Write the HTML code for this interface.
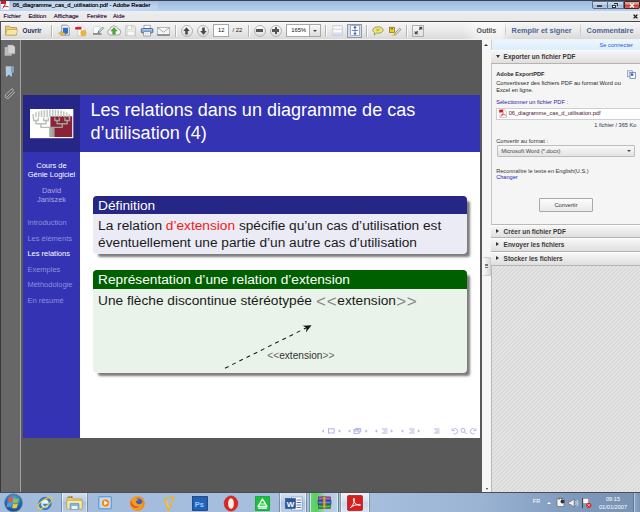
<!DOCTYPE html>
<html lang="fr"><head><meta charset="utf-8"><title>06_diagramme_cas_d_utilisation.pdf - Adobe Reader</title>
<style>
*{margin:0;padding:0;box-sizing:border-box}
html,body{width:640px;height:512px;overflow:hidden;background:#595959}
body{position:relative;font-family:"Liberation Sans",sans-serif;color:#222}
.a{position:absolute;white-space:nowrap}
/* window chrome */
#titlebar{left:0;top:0;width:640px;height:11px;background:linear-gradient(#39424f 0,#39424f 1px,#9dbbe0 1px,#abc6e8 6px,#b9d1ee 11px)}
#tglow{left:8px;top:1px;width:150px;height:10px;background:radial-gradient(ellipse at center,rgba(235,243,252,.55) 0,rgba(235,243,252,.38) 50%,rgba(235,243,252,0) 100%)}
#menubar{left:0;top:11px;width:640px;height:10px;background:linear-gradient(#edf0f5,#eaeaea 40%,#e9e9e9)}
#toolbar{left:0;top:20.5px;width:640px;height:19.5px;background:linear-gradient(#454545 0,#454545 1px,#fdfdfd 1px,#fdfdfd 2px,#f4f4f4 2px,#e9e9e9 55%,#dadada 94%,#f2f2f2 97%);border-left:1px solid #555}
#doc{left:0;top:40px;width:482px;height:452px;background:#595959}
#nav{left:0;top:40px;width:21px;height:452px;background:#676767 radial-gradient(#757575 .55px,rgba(117,117,117,0) .7px) 0 0/2px 2px;border-left:1px solid #383838;border-right:1px solid #a2a2a2}
#vscroll{left:482px;top:40px;width:9px;height:452px;background:#f6f6f6}
#panel{left:491px;top:40px;width:149px;height:452px;background:repeating-linear-gradient(135deg,#e8e8e8 0,#e4e4e4 .9px,#d6d6d6 1.42px,#d9d9d9 2.3px,#e8e8e8 2.83px);border-left:1px solid #b9b9b9}
#taskbar{left:0;top:492.4px;width:640px;height:19.6px;background:linear-gradient(90deg,#a3bbdb 0,#a8c0de 55%,#9bb4d4 75%,#7d99bb 90%,#7892b3 100%);border-top:1px solid #cfdced}
.tb{top:493px;height:19px;border-left:1px solid rgba(80,100,130,.6);border-right:1px solid rgba(80,100,130,.6);box-shadow:inset 1px 0 0 rgba(255,255,255,.6),inset -1px 0 0 rgba(255,255,255,.5);background:linear-gradient(rgba(255,255,255,.55),rgba(255,255,255,.2) 45%,rgba(255,255,255,.05) 50%,rgba(255,255,255,.25))}
.t5{font-size:5.6px;line-height:7px}
/* slide */
#slide{left:23px;top:95px;width:457px;height:343px;background:#fff;overflow:hidden}
#sb{left:0;top:0;width:57px;height:343px;background:#3333b3}
#sblogo{left:0;top:0;width:57px;height:57px;background:#262686}
#hdr{left:57px;top:0;width:400px;height:57px;background:#3333b3}
#hdr .tt{left:10.5px;top:4.3px;font-size:18.04px;line-height:22.6px;color:#fff;white-space:nowrap}
.sbt{left:0;width:57px;text-align:center;font-size:7.5px;line-height:9px;color:#fff}
.sbn{left:4.4px;font-size:7.5px;line-height:9px;color:#8f8fda}
.blk{left:69.5px;width:374.3px;border-radius:4px;box-shadow:4px 4.3px 2.4px -1.5px rgba(0,0,0,.52)}
.blk .bt{height:18px;border-radius:4px 4px 0 0;color:#fff;font-size:13.7px;line-height:20px;overflow:hidden;padding-left:5.6px;white-space:nowrap}
.blk .bb{border-radius:0 0 4px 4px;font-size:13.7px;line-height:17px;padding:2.6px 0 0 5.6px;color:#1a1a1a;white-space:nowrap}

.tx{font-size:5.8px;line-height:7px;color:#1c1c1c}
.b{font-weight:bold}
.sep{width:1px;background:#b4b4b4;box-shadow:1px 0 0 #fbfbfb}
.circ{width:12px;height:12px;margin:.5px;border-radius:50%;background:linear-gradient(#fdfdfd,#dcdcdc);border:1px solid #b2b2b2}
.box{background:#fff;border:1px solid #a8a8a8}
.ph{left:491px;width:149px;height:13.5px;background:linear-gradient(#f6f6f6,#dfdfdf);border-top:1px solid #fdfdfd;border-bottom:1px solid #b4b4b4}
.pht{left:503.6px;font-size:6.45px;line-height:8px;font-weight:bold;color:#3b3636}
.tri{width:0;height:0;border-style:solid}
</style></head><body>
<div class="a" id="titlebar"></div><div class="a" id="tglow"></div>
<div class="a" id="menubar"></div>
<div class="a" id="toolbar"></div>
<div class="a" id="doc"></div>
<div class="a" id="nav"></div>
<div class="a" id="vscroll"></div>
<div class="a" id="panel"></div>
<div class="a" id="taskbar"></div>

<!-- title bar -->
<svg class="a" style="left:1px;top:1px" width="9" height="9" viewBox="0 0 9 9"><rect x="0.3" y="0.2" width="8" height="8.4" fill="#fff"/><rect x="0" y="0" width="5" height="3" fill="#d71920"/><path d="M1.5 7.5C3 6 4 4.5 4.3 2.5M2 5.5C4 5 5.5 5 7.5 6" stroke="#d71920" stroke-width="1" fill="none"/></svg>
<div class="a tx" style="left:12.8px;top:2px;font-size:5.85px;color:#000;text-shadow:0 0 .5px rgba(0,0,0,.8)">06_diagramme_cas_d_utilisation.pdf - Adobe Reader</div>
<div class="a" style="left:591.500px;top:1.300px;width:16px;height:8.200px;border:1px solid #5a6d8a;border-radius:0 0 0 2px;background:linear-gradient(#cfdcee,#b9cde6 48%,#9db8d9 52%,#b4cae4)"><div class="a" style="left:4.5px;top:3px;width:5px;height:2px;background:#fff;border:.5px solid #444"></div></div>
<div class="a" style="left:607.500px;top:1.300px;width:16px;height:8.200px;border:1px solid #5a6d8a;border-left:none;background:linear-gradient(#cfdcee,#b9cde6 48%,#9db8d9 52%,#b4cae4)"><div class="a" style="left:4.5px;top:2.5px;width:4px;height:3px;background:#fff;border:.7px solid #333"></div><div class="a" style="left:6px;top:1px;width:4px;height:3px;border:.7px solid #333;border-left:none;border-bottom:none"></div></div>
<div class="a" style="left:623.500px;top:1.300px;width:16.500px;height:8.200px;border:1px solid #4f1f22;border-radius:0 0 2px 0;background:linear-gradient(#e6b0a6,#d67668 45%,#c4402f 55%,#d46a58)"><svg class="a" style="left:4.5px;top:1px" width="6" height="5" viewBox="0 0 6 5"><path d="M1 .5L5 4.500M5 .5L1 4.500" stroke="#fff" stroke-width="1.300"/></svg></div>
<!-- menu bar -->
<div class="a tx" style="left:3.6px;top:12.6px;color:#2b0a2e;text-shadow:0 0 .5px rgba(60,0,60,.6)">Fichier</div>
<div class="a tx" style="left:28.4px;top:12.6px;color:#2b0a2e;text-shadow:0 0 .5px rgba(60,0,60,.6)">Edition</div>
<div class="a tx" style="left:53.8px;top:12.6px;color:#2b0a2e;text-shadow:0 0 .5px rgba(60,0,60,.6);font-size:6px">Affichage</div>
<div class="a tx" style="left:87px;top:12.6px;color:#2b0a2e;text-shadow:0 0 .5px rgba(60,0,60,.6)">Fenêtre</div>
<div class="a tx" style="left:113px;top:12.6px;color:#2b0a2e;text-shadow:0 0 .5px rgba(60,0,60,.6)">Aide</div>
<svg class="a" style="left:633px;top:14px" width="5" height="5" viewBox="0 0 5 5"><path d="M.6 .6L4.400 4.400M4.400 .6L.6 4.400" stroke="#111" stroke-width="1.300"/></svg>
<!-- toolbar -->
<svg class="a" style="left:5px;top:25px" width="13" height="11" viewBox="0 0 13 11"><path d="M.5 10V1.200h4l1 1.300h6V10z" fill="#e9cf7c" stroke="#a98b3a" stroke-width=".7"/><path d="M.5 10L2 4.500h10.500L11.500 10z" fill="#f7e7a6" stroke="#b89a45" stroke-width=".6"/></svg>
<div class="a tx b" style="left:22.5px;top:27.2px;font-size:6.3px;color:#1f2d55">Ouvrir</div>
<div class="a sep" style="left:51px;top:24.5px;height:12.5px"></div>
<svg class="a" style="left:58px;top:24px" width="13" height="13" viewBox="0 0 13 13"><path d="M3.800 1.200h5.200l2.200 2.200v7.800H3.800z" fill="#fdfdfd" stroke="#7d7d88" stroke-width=".8"/><path d="M5 3.800h5v5.400L7.500 10.500 5 9.200z" fill="#2b72d4"/><path d="M.6 9.300l3-2.300v1.300c2.300-.1 3.800.7 4.400 2.700-1.300-.9-2.600-1.100-4.400-1v1.500z" fill="#f3bf2c" stroke="#b98a14" stroke-width=".4"/></svg>
<svg class="a" style="left:75px;top:24px" width="13" height="13" viewBox="0 0 13 13"><path d="M2.800 2.200h5l2.200 2.200v7.400H2.800z" fill="#fff" stroke="#b5b5b5" stroke-width=".6"/><rect x=".2" y="3" width="6.300" height="2.600" rx=".4" fill="#d9202a"/><path d="M8.300 5.600l.8 1.500 1.600-.6-.5 1.700 1.500.8-1.500.8.500 1.700-1.600-.6-.8 1.500-.8-1.500-1.600.6.500-1.700L4.900 9l1.500-.8-.5-1.700 1.600.6z" fill="#f2b52a" stroke="#c98d16" stroke-width=".3"/></svg>
<svg class="a" style="left:92px;top:24px" width="13" height="13" viewBox="0 0 13 13"><path d="M1.500 2.500h6.500v7H1.500z" fill="#fbfbfb" stroke="#c4c4c4" stroke-width=".5"/><path d="M1 10h8.500" stroke="#3a3a3a" stroke-width=".9"/><path d="M6 8.700l.5-1.700 4-4 1.200 1.200-4 4z" fill="#d8dde8" stroke="#44546e" stroke-width=".5"/><path d="M6 8.700l.5-1.700 1.200 1.200z" fill="#2a62c8"/></svg>
<svg class="a" style="left:107px;top:24px" width="14" height="13" viewBox="0 0 14 13"><path d="M3.500 11a3 3 0 0 1-.5-5.900A4 4 0 0 1 10.800 4.800 3.100 3.100 0 0 1 10.500 11z" fill="#f4f4f4" stroke="#8a8a8a" stroke-width=".7"/><path d="M7 3.500l3.200 3.500H8.300v3.300H5.700V7H3.800z" fill="#4cae3a" stroke="#2c7a20" stroke-width=".4"/></svg>
<svg class="a" style="left:124.500px;top:25px" width="12" height="12" viewBox="0 0 12 12"><path d="M.8.800h8.400l1.400 1.400v8.400H.8z" fill="#ececec" stroke="#b9b9b9" stroke-width=".8"/><rect x="2.600" y=".8" width="5.400" height="3.400" fill="#f8f8f8" stroke="#c6c6c6" stroke-width=".4"/><rect x="6" y="1.200" width="1.200" height="2.400" fill="#c9c9c9"/><rect x="2.300" y="6.200" width="6.800" height="4.400" fill="#f9f9f9" stroke="#c6c6c6" stroke-width=".4"/></svg>
<svg class="a" style="left:140px;top:24px" width="14" height="13" viewBox="0 0 14 13"><rect x="4" y="1.200" width="6.200" height="3.600" fill="#fff" stroke="#6f7f98" stroke-width=".6"/><rect x="1.300" y="4.600" width="11.600" height="4.200" rx="1" fill="#7fb3e4" stroke="#2f3f5c" stroke-width=".7"/><rect x="3.800" y="7.800" width="6.600" height="4.200" fill="#fff" stroke="#5f6f88" stroke-width=".6"/><path d="M2.200 5.600h9.800" stroke="#b9d8f4" stroke-width=".8"/><path d="M5 9.500h4.200M5 10.800h4.200" stroke="#bbb" stroke-width=".4"/></svg>
<svg class="a" style="left:157px;top:26.500px" width="13" height="9" viewBox="0 0 13 9"><rect x=".5" y=".5" width="12" height="7.500" fill="#f6f6f6" stroke="#a2a2a2" stroke-width=".7"/><path d="M.7.700l5.800 4.500L12.300.7" fill="none" stroke="#888" stroke-width=".7"/><path d="M.3 8h12.400" stroke="#444" stroke-width=".9"/></svg>
<div class="a sep" style="left:175px;top:24.5px;height:12.5px"></div>
<div class="a circ" style="left:180px;top:24px"></div>
<svg class="a" style="left:183px;top:26.500px" width="7" height="8" viewBox="0 0 7 8"><path d="M3.500.3L6.800 4H4.800v3.500H2.200V4H.2z" fill="#4a4a4a"/></svg>
<div class="a circ" style="left:196.500px;top:24px"></div>
<svg class="a" style="left:199.500px;top:26.700px" width="7" height="8" viewBox="0 0 7 8"><path d="M3.500 7.700L6.800 4H4.800V.5H2.200V4H.2z" fill="#4a4a4a"/></svg>
<div class="a box" style="left:213px;top:23.700px;width:16px;height:13.500px"></div>
<div class="a tx" style="left:218px;top:27.300px;color:#111">12</div>
<div class="a tx" style="left:232.500px;top:27.300px;color:#222">/ 22</div>
<div class="a sep" style="left:248px;top:24.5px;height:12.5px"></div>
<div class="a circ" style="left:253px;top:24px"></div><div class="a" style="left:256px;top:29.300px;width:7px;height:2.400px;background:#555"></div>
<div class="a circ" style="left:269.300px;top:24px"></div><div class="a" style="left:272.300px;top:29.300px;width:7px;height:2.400px;background:#555"></div><div class="a" style="left:274.600px;top:27px;width:2.400px;height:7px;background:#555"></div>
<div class="a box" style="left:286px;top:23.700px;width:24px;height:13.500px"></div>
<div class="a tx" style="left:291.300px;top:27.300px;color:#111">165%</div>
<div class="a" style="left:310px;top:23.700px;width:10.500px;height:13.500px;border:1px solid #a8a8a8;border-left:none;background:linear-gradient(#f9f9f9,#dcdcdc)"></div>
<div class="a tri" style="left:313.200px;top:30px;border-width:2.200px 2px 0 2px;border-color:#444 transparent transparent transparent"></div>
<div class="a sep" style="left:325px;top:24.5px;height:12.5px"></div>
<svg class="a" style="left:332px;top:25px" width="11" height="11" viewBox="0 0 11 11"><rect x=".8" y=".8" width="9.400" height="9.400" fill="#fafafc" stroke="#bcbcc8" stroke-width=".7"/><path d="M1 4.200h9" stroke="#c4c8d8" stroke-width=".7"/><rect x="1.200" y="7.500" width="8.600" height="2.400" fill="#cfdcf2"/></svg>
<div class="a" style="left:347px;top:23.500px;width:14.500px;height:14px;background:#d4dde9;border:1px solid #8e9aac"></div>
<svg class="a" style="left:349.500px;top:25px" width="10" height="11" viewBox="0 0 10 11"><rect x=".7" y=".5" width="8.600" height="10" fill="#fff" stroke="#7a88a4" stroke-width=".6"/><path d="M5 1.500v8M1.800 5.500h6.400M5 1.300l-1.200 1.500h2.400zM5 9.700L3.800 8.200h2.400z" stroke="#2f5fb8" stroke-width=".7" fill="#2f5fb8"/></svg>
<div class="a sep" style="left:365.500px;top:24.5px;height:12.5px"></div>
<svg class="a" style="left:371.500px;top:26px" width="12" height="10" viewBox="0 0 12 10"><path d="M6 .8c2.900 0 5.200 1.400 5.200 3.200S8.900 7.200 6 7.200c-.5 0-1 0-1.500-.1L2.300 9l.4-2.400C1.500 6 .8 5.100.8 4 .8 2.200 3.100.8 6 .8z" fill="#f4ea6e" stroke="#7d7a5a" stroke-width=".7"/><path d="M3.800 3.300h4.400M3.800 4.700h3.400" stroke="#8d8a4a" stroke-width=".5"/></svg>
<svg class="a" style="left:388px;top:25px" width="14" height="12" viewBox="0 0 14 12"><rect x="1.300" y="2.200" width="5.200" height="5.200" fill="#f0d11e" stroke="#6a5d1a" stroke-width=".6"/><path d="M2.800 3.800h2.200" stroke="#222" stroke-width=".7"/><path d="M6.300 10.200l.7-2.200 4.600-4.800 1.400 1.300-4.600 4.800z" fill="#e9e2c4" stroke="#4a4a4a" stroke-width=".5"/><path d="M3.800 10c1.300.6 2.600.5 3.800-.2" stroke="#efd01c" stroke-width="1.100" fill="none"/></svg>
<div class="a sep" style="left:406px;top:24.5px;height:12.5px"></div>
<div class="a" style="left:412px;top:24.500px;width:12px;height:12px;background:linear-gradient(#fafafa,#dedede);border:1px solid #b0b0b0"></div>
<svg class="a" style="left:413.500px;top:26px" width="9" height="9" viewBox="0 0 9 9"><path d="M8.300.7v3.600L7.100 3.100 5.900 4.300 4.700 3.100 5.900 1.900 4.700.7zM.7 8.300V4.700l1.200 1.200 1.200-1.200 1.200 1.200-1.200 1.200 1.200 1.200z" fill="#4d4d4d"/></svg>
<div class="a" style="left:462px;top:22.500px;width:52px;height:16.500px;background:linear-gradient(90deg,rgba(255,255,255,0),rgba(255,255,255,.55) 35%,rgba(255,255,255,.55) 75%,rgba(255,255,255,0))"></div>
<div class="a tx b" style="left:476.500px;top:26.500px;font-size:6.950px;line-height:8px;color:#525252">Outils</div>
<div class="a" style="left:505px;top:22px;width:1px;height:17px;background:linear-gradient(rgba(170,170,170,0),#c2c2c2 50%,rgba(170,170,170,0))"></div>
<div class="a tx b" style="left:511.600px;top:26.500px;font-size:7.350px;line-height:8px;color:#4b6590">Remplir et signer</div>
<div class="a" style="left:579.500px;top:22px;width:1px;height:17px;background:linear-gradient(rgba(170,170,170,0),#c2c2c2 50%,rgba(170,170,170,0))"></div>
<div class="a tx b" style="left:586.600px;top:26.500px;font-size:7.350px;line-height:8px;color:#4b6590">Commentaire</div>

<svg class="a" style="left:4px;top:44px" width="12" height="13" viewBox="0 0 12 13"><rect x=".8" y="3" width="7" height="8.800" fill="#bdbdbd" stroke="#8d8d8d" stroke-width=".4"/><path d="M3.800 1h5.200l2 2v6.800H3.800z" fill="#d2d2d2" stroke="#9a9a9a" stroke-width=".4"/></svg>
<svg class="a" style="left:5px;top:66px" width="10" height="12" viewBox="0 0 10 12"><path d="M.8.600h7.800v6H7V11L4 8.300 1 11z" fill="#a9c1d2"/><path d="M5.500.600h3.100v6H5.500z" fill="#7fa3bd"/><path d="M.8.600h5v10.200L4 8.300 1 11z" fill="#b4cbdb"/></svg>
<svg class="a" style="left:4px;top:87px" width="12" height="13" viewBox="0 0 12 13"><path d="M3.200 9.800l5.800-5.600a1.300 1.300 0 0 0-1.900-1.900L1.800 7.600a2.300 2.300 0 0 0 3.300 3.200l5.500-5.500" fill="none" stroke="#bdbdbd" stroke-width=".9" stroke-linecap="round"/></svg>

<!-- right panel -->
<div class="a" style="left:491px;top:40px;width:149px;height:10.5px;background:linear-gradient(#ecf6fe,#dbeefc);border-left:1px solid #c5d3df"></div>
<div class="a tx" style="left:599.5px;top:41.800px;font-size:5.700px;color:#1f55d8">Se connecter</div>
<div class="a ph" style="top:50px"></div>
<div class="a tri" style="left:495.800px;top:55.300px;border-width:3px 2.300px 0 2.300px;border-color:#333 transparent transparent transparent"></div>
<div class="a pht" style="top:52.700px">Exporter un fichier PDF</div>
<div class="a" style="left:491px;top:63.500px;width:149px;height:161.500px;background:#f5f5f5;border-left:1px solid #c4c4c4;border-bottom:1px solid #b9b9b9"></div>
<div class="a tx b" style="left:496.200px;top:71.200px;font-size:5.650px;color:#2b2b2b">Adobe ExportPDF</div>
<svg class="a" style="left:627px;top:70px" width="9" height="9" viewBox="0 0 9 9"><rect x=".5" y=".8" width="5" height="6" fill="#dfe9f6" stroke="#6d86ad" stroke-width=".6"/><rect x="3" y="2.500" width="5.300" height="6" fill="#fff" stroke="#4f6c9c" stroke-width=".7"/><rect x="3.800" y="3.300" width="2.500" height="2.500" fill="#3c6bc0"/></svg>
<div class="a tx" style="left:496.200px;top:79.800px;font-size:5.700px;color:#262626">Convertissez des fichiers PDF au format Word ou</div>
<div class="a tx" style="left:496.200px;top:86.600px;font-size:5.700px;color:#262626">Excel en ligne.</div>
<div class="a tx" style="left:496.200px;top:99.200px;font-size:5.650px;color:#2a2396">Sélectionner un fichier PDF :</div>
<div class="a" style="left:496px;top:107.500px;width:144px;height:12.500px;background:#fff;border:1px solid #cfcfcf;border-right:none"></div>
<svg class="a" style="left:498.500px;top:109.300px" width="8" height="9" viewBox="0 0 8 9"><path d="M1 .4h4.500l2 2v6.200H1z" fill="#fff" stroke="#999" stroke-width=".5"/><rect x=".2" y=".8" width="4" height="2.600" fill="#d71920"/><path d="M2 7.500C3.200 6.300 4 5 4.200 3.500M2.300 6c1.600-.5 3-.5 4.500.2" stroke="#d71920" stroke-width=".8" fill="none"/></svg>
<div class="a tx" style="left:508.700px;top:109.800px;font-size:5.650px;color:#4a1234">06_diagramme_cas_d_utilisation.pdf</div>
<div class="a tx" style="left:540px;width:96.300px;text-align:right;top:121.500px;font-size:5.600px;color:#2a3350">1 fichier / 365 Ko</div>
<div class="a tx" style="left:496.200px;top:138px;font-size:5.700px;color:#303030">Convertir au format :</div>
<div class="a" style="left:497px;top:145px;width:138px;height:11.500px;background:linear-gradient(#f8f8f8,#e4e4e4);border:1px solid #bdbdbd;border-radius:1px"></div>
<div class="a tx" style="left:501.200px;top:148px;font-size:5.700px;color:#444">Microsoft Word (*.docx)</div>
<div class="a tri" style="left:627px;top:149.500px;border-width:2.300px 2px 0 2px;border-color:#444 transparent transparent transparent"></div>
<div class="a tx" style="left:496.200px;top:167.800px;font-size:5.600px;color:#333">Reconnaître le texte en English(U.S.)</div>
<div class="a tx" style="left:496.200px;top:173.500px;font-size:5.600px;color:#1c1cc0">Changer</div>
<div class="a" style="left:539px;top:198px;width:54px;height:14px;background:linear-gradient(#fcfcfc,#e9e9e9);border:1px solid #a9a9a9;border-radius:1px"></div>
<div class="a tx" style="left:539px;width:54px;text-align:center;top:201.500px;font-size:5.700px;color:#333">Convertir</div>
<div class="a ph" style="top:224.500px"></div><div class="a ph" style="top:238px"></div><div class="a ph" style="top:251.500px;height:14px"></div>
<div class="a tri" style="left:496.300px;top:228.700px;border-width:2.300px 0 2.300px 3px;border-color:transparent transparent transparent #333"></div>
<div class="a tri" style="left:496.300px;top:242.200px;border-width:2.300px 0 2.300px 3px;border-color:transparent transparent transparent #333"></div>
<div class="a tri" style="left:496.300px;top:255.700px;border-width:2.300px 0 2.300px 3px;border-color:transparent transparent transparent #333"></div>
<div class="a pht" style="top:227.900px">Créer un fichier PDF</div>
<div class="a pht" style="top:241.300px">Envoyer les fichiers</div>
<div class="a pht" style="top:254.900px">Stocker les fichiers</div>
<!-- scroll strip -->
<div class="a tri" style="left:484.300px;top:43.600px;border-width:0 2.200px 2.600px 2.200px;border-color:transparent transparent #333 transparent"></div>
<div class="a tri" style="left:485.500px;top:487.500px;border-width:2px 1.500px 0 1.500px;border-color:#333 transparent transparent transparent"></div>
<div class="a" style="left:483px;top:257px;width:7.500px;height:18.500px;background:linear-gradient(90deg,#fbfbfb,#d9d9d9);border:1px solid #cfcfcf;border-left:none;border-radius:1px"></div>
<div class="a" style="left:485.300px;top:264px;width:3px;height:3.500px;background:repeating-linear-gradient(#777 0,#777 .7px,transparent .7px,transparent 1.400px)"></div>

<!-- taskbar -->
<div class="a" style="left:0;top:491.600px;width:640px;height:.9px;background:#4a4f57"></div>
<div class="a tb" style="left:61px;width:27px"></div>
<div class="a tb" style="left:278.500px;width:28.500px"></div>
<div class="a tb" style="left:309px;width:29.500px;background:linear-gradient(90deg,rgba(90,215,90,.75) 0,rgba(80,210,80,.9) 22%,rgba(110,210,110,.55) 40%,rgba(200,225,235,.3) 55%,rgba(255,255,255,.25) 100%)"></div>
<div class="a tb" style="left:340px;width:30px;background:linear-gradient(rgba(255,255,255,.8),rgba(255,255,255,.55) 45%,rgba(255,255,255,.4) 50%,rgba(255,255,255,.6))"></div>
<svg class="a" style="left:3px;top:493px" width="21" height="19" viewBox="0 0 21 19">
  <defs><radialGradient id="orb" cx=".5" cy=".35" r=".7"><stop offset="0" stop-color="#6fb6ec"/><stop offset=".55" stop-color="#2a72b8"/><stop offset="1" stop-color="#123a6e"/></radialGradient></defs>
  <circle cx="10.500" cy="9.800" r="9" fill="url(#orb)" stroke="#5f86b4" stroke-width=".6"/>
  <g transform="translate(10.3 9.6) scale(1.3) translate(-9.9 -9.8)">
  <path d="M6.300 6.300c1.300-.8 2.500-.7 3.600-.1l-.7 3.200c-1.100-.6-2.300-.6-3.600.1z" fill="#ea5a2c"/>
  <path d="M10.700 6.600c1.200.6 2.400.6 3.700-.1l-.8 3.200c-1.200.7-2.400.7-3.600.1z" fill="#86c640"/>
  <path d="M5.300 10.300c1.300-.8 2.500-.7 3.600-.1l-.7 3.200c-1.100-.6-2.300-.6-3.600.1z" fill="#4a9ae6"/>
  <path d="M9.700 10.600c1.200.6 2.400.6 3.700-.1l-.8 3.200c-1.200.7-2.400.7-3.600.1z" fill="#f8c62c"/>
  </g>
</svg>
<svg class="a" style="left:36px;top:494px" width="18" height="18" viewBox="0 0 18 18">
  <circle cx="9" cy="9.500" r="6.200" fill="#2f86d6" stroke="#1a5ea8" stroke-width=".6"/>
  <path d="M5.200 9.700h7.600c0-2.600-1.600-4.200-3.800-4.200s-3.900 1.700-3.900 4.100c0 2.500 1.700 4.200 4 4.200 1.600 0 2.900-.8 3.500-2.200h-2.200c-.3.500-.8.700-1.400.7-1 0-1.700-.7-1.800-1.800" fill="#eaf4fd"/>
  <ellipse cx="9" cy="9" rx="8.600" ry="3.400" transform="rotate(-35 9 9)" fill="none" stroke="#f2c22e" stroke-width="1.200"/>
</svg>
<svg class="a" style="left:66px;top:495px" width="17" height="16" viewBox="0 0 17 16">
  <path d="M1 14V2.500h5l1.200 1.500H16V14z" fill="#e8c968" stroke="#b1902f" stroke-width=".6"/>
  <path d="M1 14V5.500h15V14z" fill="#f8e7a0" stroke="#c2a345" stroke-width=".5"/>
  <rect x="4" y="8.500" width="9" height="5.500" rx=".8" fill="#79b7e8" stroke="#3c7fba" stroke-width=".5"/>
  <rect x="5.500" y="11" width="6" height="3" fill="#e9f3fb"/>
  <rect x="2" y="1.300" width="2" height="1.400" fill="#4caf50"/><rect x="4.500" y="1.300" width="2" height="1.400" fill="#e53935"/>
</svg>
<svg class="a" style="left:98px;top:496px" width="15" height="14" viewBox="0 0 15 14">
  <rect x=".5" y=".5" width="13" height="12.500" rx="1" fill="#7db4e8" stroke="#4f8ccc" stroke-width=".6"/>
  <rect x="1.500" y="1.500" width="11" height="10.500" fill="#b4d8f6"/>
  <circle cx="7.500" cy="7" r="4.300" fill="#f28b1e" stroke="#fff" stroke-width=".6"/>
  <path d="M6.200 4.800L10 7 6.200 9.200z" fill="#fff"/>
</svg>
<svg class="a" style="left:129px;top:494.500px" width="17" height="17" viewBox="0 0 17 17">
  <circle cx="8.500" cy="8.500" r="7.300" fill="#f08a1c"/>
  <circle cx="9" cy="8" r="4.600" fill="#3b5fc0"/>
  <path d="M2 5c2-3.500 6-4.800 9.500-3.200-2.500-.2-4 .8-4.800 2.300 1.300-.2 2.500.3 3 1.500-1.500-.3-2.500.2-3 1 .5 1.800 2 2.800 4 2.600 1.500-.2 2.600-1.100 3-2.700.8 3-.2 6-2.700 7.600-3 1.900-6.800 1.300-8.800-1.300C.8 10.500.7 7.500 2 5z" fill="#f39c22"/>
  <path d="M2 5c.3 2.500 1.300 4.300 3 5.500 1.700 1.200 4 1.500 6 .6-1.500 2-4.500 2.600-6.800 1.200C1.800 10.800.9 7.800 2 5z" fill="#e4511c"/>
</svg>
<svg class="a" style="left:162px;top:494.500px" width="15" height="17" viewBox="0 0 15 17">
  <path d="M2.500 4.500c2.500-1.300 5.500-2.200 9.500-2.600L6.500 15.800 5.300 12z" fill="none" stroke="#f3b41a" stroke-width="1.400" stroke-linejoin="round"/>
  <path d="M4 5.200l2.500 7.500" stroke="#f8d36a" stroke-width=".8"/>
</svg>
<svg class="a" style="left:192px;top:495.500px" width="16" height="15" viewBox="0 0 16 15">
  <rect x=".4" y=".4" width="15.200" height="14.200" fill="#1c4f9c" stroke="#0e2f66" stroke-width=".6"/>
  <rect x="1.300" y="1.300" width="13.400" height="12.400" fill="#2463b8"/>
  <text x="2.800" y="10.800" font-family="Liberation Sans, sans-serif" font-size="7.500" font-weight="bold" fill="#8fd0ff">Ps</text>
</svg>
<svg class="a" style="left:223px;top:494.500px" width="16" height="17" viewBox="0 0 16 17">
  <ellipse cx="8" cy="8.500" rx="6.800" ry="7.600" fill="#e1261c"/>
  <ellipse cx="8" cy="8.500" rx="2.900" ry="5.300" fill="#f4f0f0"/>
  <ellipse cx="8" cy="8.500" rx="6.800" ry="7.600" fill="none" stroke="#a8140e" stroke-width=".5"/>
</svg>
<svg class="a" style="left:254.500px;top:495.500px" width="15" height="15" viewBox="0 0 15 15">
  <rect x=".3" y=".3" width="14.400" height="14.400" fill="#18c23a" stroke="#0d8a25" stroke-width=".5"/>
  <path d="M7.500 3L12 10.500H3z" fill="none" stroke="#fff" stroke-width="1.400" stroke-linejoin="round"/>
  <path d="M3 12.200h9M5.200 8h4.600" stroke="#fff" stroke-width="1.200"/>
</svg>
<svg class="a" style="left:285px;top:495.500px" width="18" height="15" viewBox="0 0 18 15">
  <rect x="6.500" y="1" width="10.500" height="13" fill="#fff" stroke="#7a8fb8" stroke-width=".6"/>
  <path d="M11.500 4h4.500M11.500 6.500h4.500M11.500 9h4.500M11.500 11.500h4.500" stroke="#2b5aa8" stroke-width=".8"/>
  <rect x=".5" y="2.500" width="10" height="10" fill="#2b579a" stroke="#1c3f78" stroke-width=".5"/>
  <text x="1.800" y="10.600" font-family="Liberation Sans, sans-serif" font-size="8" font-weight="bold" fill="#fff">W</text>
</svg>
<svg class="a" style="left:316px;top:496px" width="17" height="14" viewBox="0 0 17 16">
  <rect x="1.500" y="1" width="14" height="4.300" fill="#a03fa8" stroke="#3a1a5c" stroke-width=".5"/>
  <rect x="1" y="5.300" width="15" height="4.500" fill="#3568c8" stroke="#1a2f6c" stroke-width=".5"/>
  <rect x="1.500" y="9.800" width="14" height="4.700" fill="#2f9a3a" stroke="#14501a" stroke-width=".5"/>
  <rect x="6.800" y=".8" width="3.200" height="13.800" fill="#c9a53a" stroke="#6a5210" stroke-width=".4"/>
  <path d="M2 2.700h13M2 7.500h13M2 12h13" stroke="#e8d9a0" stroke-width=".5" stroke-opacity=".7"/>
</svg>
<svg class="a" style="left:347px;top:495px" width="16" height="16" viewBox="0 0 16 16">
  <rect x=".5" y=".5" width="15" height="15" rx="1.200" fill="#d81e1e" stroke="#8c0e0e" stroke-width=".6"/>
  <path d="M3.200 12.800c2.200-1.800 3.900-4.600 4.400-8.300.2-1.500-1.300-1.600-1.300-.2.200 3 2.700 5.600 6.200 6.200 1.300.2 1.300-1.100 0-1.100-3.300.1-6.500 1.200-9 3.100" fill="none" stroke="#fff" stroke-width="1"/>
</svg>
<div class="a tx" style="left:532.800px;top:498.200px;font-size:5.600px;color:#fff">FR</div>
<div class="a tri" style="left:546.800px;top:501.800px;border-width:0 2.200px 2.400px 2.200px;border-color:transparent transparent #fff transparent"></div>
<svg class="a" style="left:556px;top:497px" width="10" height="11" viewBox="0 0 10 11"><rect x="1" y="1.500" width="7" height="8" rx="1" fill="#f4f4f4" stroke="#555" stroke-width=".6"/><path d="M3 .8v2M6 .8v2" stroke="#444" stroke-width=".8"/><circle cx="6.500" cy="4.500" r="2" fill="#333"/></svg>
<svg class="a" style="left:568px;top:497.500px" width="11" height="10" viewBox="0 0 11 10"><path d="M.8 3.500h2L6 1v8L2.800 6.500h-2z" fill="#f4f4f4" stroke="#555" stroke-width=".5"/><path d="M7.500 3c.8.600.8 3.400 0 4M8.800 1.800c1.500 1.400 1.500 5 0 6.400" stroke="#f4f4f4" stroke-width=".7" fill="none"/></svg>
<svg class="a" style="left:581px;top:496.500px" width="11" height="12" viewBox="0 0 11 12"><path d="M1.500 1v10" stroke="#444" stroke-width="1"/><path d="M2 1.500h5.500v5H2z" fill="#fafafa" stroke="#666" stroke-width=".4"/><circle cx="7.800" cy="8.300" r="2.600" fill="#e0241c"/><path d="M6.700 7.200l2.200 2.200M8.900 7.200L6.700 9.400" stroke="#fff" stroke-width=".7"/></svg>
<div class="a tx" style="left:596px;width:34px;text-align:center;top:495.800px;font-size:5.600px;color:#fff">09:15</div>
<div class="a tx" style="left:596px;width:34px;text-align:center;top:503.800px;font-size:5.600px;color:#fff">01/01/2007</div>
<div class="a" style="left:633px;top:493px;width:7px;height:19px;border-left:1px solid #5f7896;background:linear-gradient(90deg,#8fa8c6,#7a93b3);box-shadow:inset 1px 0 0 rgba(255,255,255,.4)"></div>

<div class="a" id="slide">
  <div class="a" id="sb"></div>
  <div class="a" id="sblogo"></div>
  <div class="a" id="hdr"><div class="a tt">Les relations dans un diagramme de cas<br>d’utilisation (4)</div></div>
  <div class="a sbt" style="top:66px">Cours de<br>Génie Logiciel</div>
  <div class="a sbt" style="top:91.1px;color:#a9a9e2">David<br>Janiszek</div>
  <div class="a sbn" style="top:122.7px">Introduction</div>
  <div class="a sbn" style="top:138.5px">Les éléments</div>
  <div class="a sbn" style="top:153.7px;color:#fff">Les relations</div>
  <div class="a sbn" style="top:169.5px">Exemples</div>
  <div class="a sbn" style="top:185.2px">Méthodologie</div>
  <div class="a sbn" style="top:200.8px">En résumé</div>

  <div class="a blk" style="top:101.2px;height:58.3px;background:#ebebf6">
    <div class="bt" style="background:#262686">Définition</div>
    <div class="bb">La relation <span style="color:#f61818">d’extension</span> spécifie qu’un cas d’utilisation est<br>éventuellement une partie d’un autre cas d’utilisation</div>
  </div>
  <div class="a blk" style="top:175.2px;height:102.8px;background:#e9f3ea">
    <div class="bt" style="background:#006000;height:19px">Représentation d’une relation d’extension</div>
    <div class="bb">Une flèche discontinue stéréotypée <span style="color:#858585;font-size:17px;line-height:0;letter-spacing:.72px;padding-left:.3px;position:relative;top:2.5px">&lt;&lt;</span>extension<span style="color:#858585;font-size:17px;line-height:0;letter-spacing:.72px;padding-left:.3px;position:relative;top:2.5px">&gt;&gt;</span></div>
  </div>
  <svg class="a" style="left:7px;top:14px" width="44" height="30" viewBox="0 0 44 30">
    <rect x="0" y="0" width="43.3" height="29.2" fill="#fff"/>
    <rect x="20.4" y="7.3" width="21.8" height="20.7" fill="#8c2238"/>
    <g fill="none" stroke="#a9b4ab" stroke-width="1.4" stroke-opacity=".85">
      <path d="M21.2 28V18.6M10.3 18.4H32.8M10.9 18.4V14.7M32.2 18.4V14.7M5.3 14.7H16.6M26.5 14.7H37.8M5.9 14.7V11.5M16 14.7V11.5M27.1 14.7V11.5M37.2 14.7V11.5"/>
      <path d="M3 11.5H8.8M13.1 11.5H18.9M24.2 11.5H30M34.3 11.5H40.1M3.6 11.5V8.5M8.2 11.5V8.5M13.7 11.5V8.5M18.3 11.5V8.5M24.8 11.5V8.5M29.4 11.5V8.5M34.9 11.5V8.5M39.5 11.5V8.5"/>
      <path d="M21.2 28V18.6" stroke-width="5.6" transform="translate(0.6 0)"/>
    </g>
    <g stroke="#b5beb7" stroke-width="1.55" stroke-opacity=".85">
      <path d="M3.2 5.0V9.3M6.0 3.3V7.9M8.8 2.2V7.9M11.5 1.5V7.9M14.3 1.1V7.9M17.1 0.8V7.9M19.9 0.6V7.9M22.7 0.6V7.9M25.4 0.8V7.9M28.2 1.1V7.9M31.0 1.5V7.9M33.8 2.2V7.9M36.6 3.2V7.9M39.3 4.9V9.3"/>
    </g>
  </svg>
  <svg class="a" style="left:196px;top:224px" width="150" height="54" viewBox="196 224 150 54">
    <path d="M202 273.2L283 233" fill="none" stroke="#1a1a1a" stroke-width="1.05" stroke-dasharray="4 4"/>
    <path d="M288.600 230.200L279.400 230.800C281.500 231.600 282.600 232.300 283.200 233.100C283.500 234.200 283.400 235.600 282.900 237.600Z" fill="#1a1a1a"/>
    <text x="244.300" y="264" font-family="Liberation Sans, sans-serif" font-size="10.150" fill="#333"><tspan fill="#666">&lt;&lt;</tspan>extension<tspan fill="#666">&gt;&gt;</tspan></text>
  </svg>
  <svg class="a" style="left:296px;top:331px" width="160" height="10" viewBox="296 0 160 10">
    <g fill="#b9b9e8" stroke="none">
      <path d="M298.6 5l2.4-1.8v3.6zM318.2 5l-2.4-1.8v3.6zM325 5l2.400-1.800v3.600zM344.700 5l-2.400-1.800v3.600zM351.800 5l2.400-1.800v3.600zM370.200 5l-2.400-1.800v3.600zM378 5l2.400-1.800v3.600zM397.200 5l-2.400-1.800v3.600z"/>
    </g>
    <g fill="none" stroke="#a9a9e2" stroke-width="0.9">
      <rect x="305.500" y="2.800" width="5.600" height="4.200"/>
      <rect x="331" y="3.600" width="5" height="3.800"/><path d="M332.500 3.600v-1.200h5.200v3.600h-1.600M331 5h5" />
      <path d="M359 3h5.500M360.500 5h4M359 7h5.500M386 3h5.500M387.500 5h4M386 7h5.500M411 3h5.500M412.500 5h4M411 7h5.500"/>
      <path d="M430.500 3.200a2.600 2.600 0 1 1 0 4.200M429.200 2.400v2.200h2.200"/>
      <circle cx="440" cy="4.400" r="2"/><path d="M441.500 6l2 2"/>
      <path d="M451.500 3.200a2.600 2.600 0 1 0 0 4.200M452.800 2.400v2.200h-2.200"/>
    </g>
  </svg>
</div>
</body></html>
